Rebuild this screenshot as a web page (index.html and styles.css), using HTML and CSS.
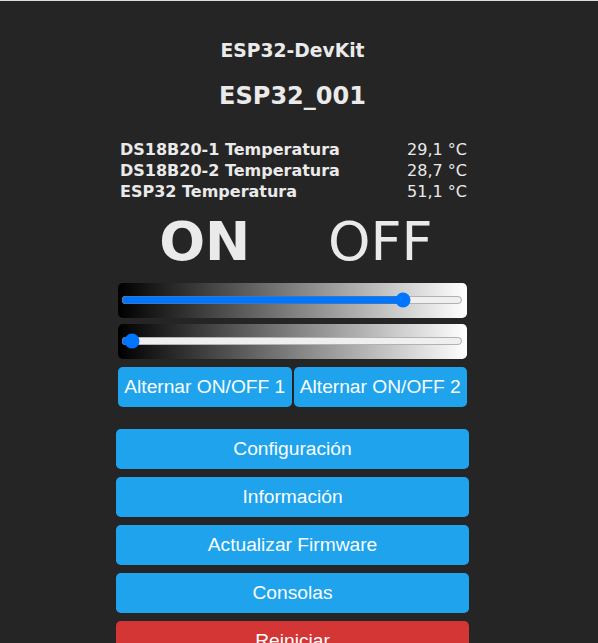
FILE: index.html
```html
<!DOCTYPE html>
<html lang="es">
<head>
<meta charset="utf-8">
<title>ESP32_001 - Principal</title>
<link rel="stylesheet" href="styles.css">
</head>
<body>
<div class="topline"></div>
<main class="page">
  <header class="head">
    <h3 class="model">ESP32-DevKit</h3>
    <h2 class="name">ESP32_001</h2>
  </header>
  <div class="sensors">
    <div class="row"><span class="label">DS18B20-1 Temperatura</span><span class="value">29,1 °C</span></div>
    <div class="row"><span class="label">DS18B20-2 Temperatura</span><span class="value">28,7 °C</span></div>
    <div class="row"><span class="label">ESP32 Temperatura</span><span class="value">51,1 °C</span></div>
  </div>
  <div class="states">
    <div class="state on">ON</div>
    <div class="state off">OFF</div>
  </div>
  <div class="slider first"><input class="range" type="range" min="0" max="100" value="84"></div>
  <div class="slider second"><input class="range" type="range" min="0" max="100" value="1"></div>
  <div class="toggles">
    <button class="btn">Alternar ON/OFF 1</button>
    <button class="btn">Alternar ON/OFF 2</button>
  </div>
  <nav class="menu">
    <button class="btn">Configuración</button>
    <button class="btn">Información</button>
    <button class="btn">Actualizar Firmware</button>
    <button class="btn">Consolas</button>
    <button class="btn danger">Reiniciar</button>
  </nav>
</main>
</body>
</html>
```
FILE: styles.css
```css
html, body {
  margin: 0;
  padding: 0;
  background: #252525;
  color: #eaeaea;
  font-family: "DejaVu Sans", Verdana, sans-serif;
  overflow: hidden;
}
.topline {
  height: 1px;
  background: #dedede;
}
.page {
  width: 353px;
  margin-left: 116px;
  padding-top: 39px;
}
.head {
  text-align: center;
}
.model {
  margin: 0;
  font-size: 18.72px;
  font-weight: bold;
}
.name {
  margin: 20.5px 0 0;
  font-size: 24px;
  font-weight: bold;
}
.sensors {
  margin-top: 30.6px;
  padding: 0 2px 0 4px;
  font-size: 16px;
}
.row {
  display: flex;
  justify-content: space-between;
  line-height: 20.8px;
}
.label {
  font-weight: bold;
}
.states {
  display: grid;
  grid-template-columns: 1fr 1fr;
  column-gap: 2px;
  padding: 0 2px;
  margin-top: 8px;
  font-size: 54px;
  text-align: center;
}
.state.on {
  font-weight: bold;
}
.slider {
  height: 35px;
  margin: 0 2px;
  padding-left: 3px;
  border-radius: 4.8px;
  background-image: linear-gradient(to right, #000, #fff);
  display: flex;
  align-items: center;
  box-sizing: border-box;
}
.slider.first {
  margin-top: 10px;
}
.slider.second {
  margin-top: 6px;
}
.range {
  width: 342px;
  margin: 0 0 2px;
  height: 16px;
}
.btn {
  display: block;
  width: 100%;
  height: 40px;
  padding: 0;
  border: 0;
  border-radius: 4.8px;
  background: #1fa3ec;
  color: #faffff;
  font-family: "Liberation Sans", Arial, sans-serif;
  font-size: 19.2px;
  line-height: 40px;
  text-align: center;
  cursor: pointer;
}
.toggles {
  display: grid;
  grid-template-columns: 1fr 1fr;
  column-gap: 2px;
  padding: 0 2px;
  margin-top: 8px;
}
.menu {
  margin-top: 22px;
  display: flex;
  flex-direction: column;
  gap: 8px;
}
.btn.danger {
  background: #d43535;
}
```
